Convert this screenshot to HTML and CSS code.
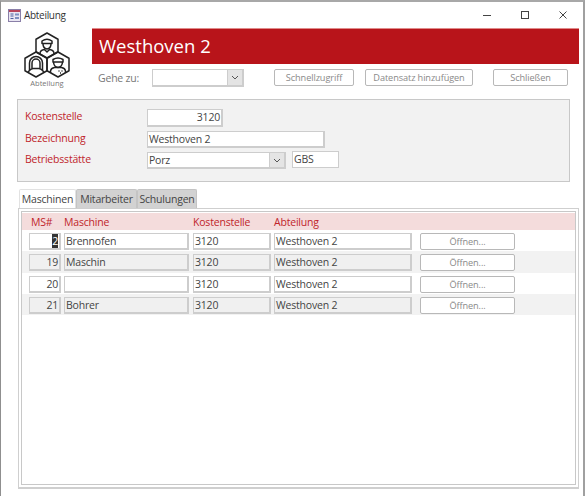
FILE: index.html
```html
<!DOCTYPE html>
<html>
<head>
  <meta http-equiv="content-type" content="text/html; charset=utf-8" />
  <title>Abteilung</title>
  <link rel="stylesheet" href="styles.css">
</head>
<body>

<div class="window">

  <div class="titlebar">
    <svg class="form-icon" width="13" height="13" viewBox="0 0 13 13">
      <rect x="0.5" y="0.5" width="12" height="12" fill="#e9e6f2" stroke="#8a7fa8"/>
      <rect x="1" y="1" width="11" height="2" fill="#b8455c"/>
      <path d="M2.5 5h3M2.5 7h3M2.5 9.500h3" stroke="#4a5f9e" fill="none"/>
      <rect x="7" y="4.500" width="4" height="2" fill="#7f90c0"/>
      <rect x="7" y="8" width="4" height="2" fill="#7f90c0"/>
    </svg>
    <span class="title-text">Abteilung</span>
    <div class="controls">
      <svg width="10" height="10" viewBox="0 0 10 10"><path d="M1 5.500h8" stroke="#444" fill="none"/></svg>
      <svg width="10" height="10" viewBox="0 0 10 10"><rect x="1.500" y="1.500" width="7" height="7" stroke="#444" fill="none"/></svg>
      <svg width="10" height="10" viewBox="0 0 10 10"><path d="M1.500 1.500l7 7M8.500 1.500l-7 7" stroke="#444" fill="none"/></svg>
    </div>
  </div>

  <div class="header">
    <div class="logo">
      <svg class="logo-icon" width="46" height="46" viewBox="0 0 46 46" fill="none" stroke="#222" stroke-width="1.500" stroke-linejoin="round">
        <g transform="translate(1 1)">
          <!-- three hexagons -->
          <path d="M22 0l11 6.250v12.500L22 25 11 18.750V6.250z"/>
          <path d="M11 19l11 6.250v12.500L11 44 0 37.750V25.250z"/>
          <path d="M33 19l11 6.250v12.500L33 44 22 37.750V25.250z"/>
          <!-- top person -->
          <path d="M17 8q5-3.500 10 0v2.500H17z"/>
          <path d="M18 10.500q0 5 4 5.500 4-.5 4-5.500"/>
          <path d="M15 21v-1q.5-3 4.500-3.500l2.500 2.500 2.500-2.500q4 .5 4.500 3.500v1"/>
          <!-- left person -->
          <path d="M4.500 37v-7a6.500 6.500 0 0 1 13 0v7"/>
          <path d="M7 35.500V30a4 4 0 0 1 8 0v5.500"/>
          <path d="M3 40q1-3.500 5-4.500h6q4 1 5 4.500"/>
          <!-- right person -->
          <path d="M28 26.500q5-3 10 0V29H28z"/>
          <path d="M28.500 29q.3 5 4.500 5.500 4.200-.5 4.500-5.500"/>
          <path d="M25.500 40v-2q.5-3 4-3.500h7q3.500.5 4 3.500v2"/>
          <path d="M33.500 38h1M36.500 38h1M35 40h1"/>
        </g>
      </svg>
      <div class="logo-caption">Abteilung</div>
    </div>

    <div class="header-main">
      <div class="banner">Westhoven 2</div>
      <div class="nav">
        <span class="nav-label">Gehe zu:</span>
        <div class="combo nav-combo"><span class="combo-value"></span><span class="combo-arrow"><svg width="8" height="5" viewBox="0 0 8 5"><path d="M1 1l3 3 3-3" stroke="#555" fill="none"/></svg></span></div>
        <div class="btn btn-quick">Schnellzugriff</div>
        <div class="btn btn-add">Datensatz hinzufügen</div>
        <div class="btn btn-close">Schließen</div>
      </div>
    </div>
  </div>

  <div class="panel">
    <div class="panel-row">
      <label class="panel-label">Kostenstelle</label>
      <div class="field num field-cost">3120</div>
    </div>
    <div class="panel-row">
      <label class="panel-label">Bezeichnung</label>
      <div class="field field-name">Westhoven 2</div>
    </div>
    <div class="panel-row">
      <label class="panel-label">Betriebsstätte</label>
      <div class="combo site-combo"><span class="combo-value">Porz</span><span class="combo-arrow"><svg width="8" height="5" viewBox="0 0 8 5"><path d="M1 1l3 3 3-3" stroke="#555" fill="none"/></svg></span></div>
      <div class="field field-short">GBS</div>
    </div>
  </div>

  <div class="tabs">
    <div class="tab active">Maschinen</div>
    <div class="tab tab-staff">Mitarbeiter</div>
    <div class="tab tab-train">Schulungen</div>
  </div>

  <div class="tabframe">
    <div class="tabinner">
      <div class="list-head">
        <div class="col-ms head-ms">MS#</div>
        <div class="col-machine">Maschine</div>
        <div class="col-cost">Kostenstelle</div>
        <div class="col-dept">Abteilung</div>
      </div>

      <div class="list-row">
        <div class="field num col-ms"><span class="selected">2</span></div>
        <div class="field col-machine">Brennofen</div>
        <div class="field col-cost">3120</div>
        <div class="field col-dept">Westhoven 2</div>
        <div class="btn col-open">Öffnen...</div>
      </div>
      <div class="list-row alt">
        <div class="field num col-ms">19</div>
        <div class="field col-machine">Maschin</div>
        <div class="field col-cost">3120</div>
        <div class="field col-dept">Westhoven 2</div>
        <div class="btn col-open">Öffnen...</div>
      </div>
      <div class="list-row">
        <div class="field num col-ms">20</div>
        <div class="field col-machine"></div>
        <div class="field col-cost">3120</div>
        <div class="field col-dept">Westhoven 2</div>
        <div class="btn col-open">Öffnen...</div>
      </div>
      <div class="list-row alt">
        <div class="field num col-ms">21</div>
        <div class="field col-machine">Bohrer</div>
        <div class="field col-cost">3120</div>
        <div class="field col-dept">Westhoven 2</div>
        <div class="btn col-open">Öffnen...</div>
      </div>
    </div>
  </div>

</div>

</body>
</html>
```
FILE: styles.css
```css
body {
  margin: 0;
  background: #fff;
  font-family: "Open Sans", "Liberation Sans", sans-serif;
  font-size: 10.5px;
  letter-spacing: -0.2px;
  color: #444;
  overflow: hidden;
}
.window {
  box-sizing: border-box;
  width: 585px;
  height: 496px;
  border-top: 2px solid #a8a8a8;
  border-left: 1px solid #8f8f8f;
  border-right: 2px solid #a0a0a0;
  background: #fff;
}

/* title bar */
.titlebar {
  display: flex;
  align-items: center;
  height: 26px;
  padding-left: 7px;
  color: #333;
}
.title-text {
  margin-left: 3px;
  font-size: 10px;
  letter-spacing: -0.3px;
}
.controls {
  display: flex;
  gap: 28px;
  margin-left: auto;
  margin-right: 15px;
}

/* header */
.header {
  display: flex;
  height: 62px;
}
.logo {
  width: 91px;
  padding-top: 4px;
  padding-left: 23px;
  box-sizing: border-box;
}
.logo-icon {
  display: block;
}
.logo-caption {
  width: 46px;
  text-align: center;
  font-size: 7.500px;
  letter-spacing: 0;
  line-height: 10px;
  color: #777;
}
.header-main {
  flex: 1;
}
.banner {
  box-sizing: border-box;
  height: 36px;
  margin-right: 4px;
  padding-left: 7px;
  border-top: 1px solid #e08a8a;
  background: #b8141a;
  color: #fff;
  font-size: 18.500px;
  letter-spacing: 0;
  line-height: 33px;
}
.nav {
  display: flex;
  align-items: flex-start;
  margin-top: 5px;
  padding-left: 6px;
}
.nav-label {
  width: 54px;
  line-height: 18px;
  color: #777;
}

/* inputs */
.combo, .field {
  box-sizing: border-box;
  border: 1px solid #cdcdcd;
  border-bottom-width: 2px;
  border-right-width: 2px;
  background: #fff;
  white-space: nowrap;
  overflow: hidden;
}
.combo {
  display: flex;
}
.combo-value {
  flex: 1;
  padding-left: 1px;
  line-height: 15px;
}
.combo-arrow {
  display: flex;
  align-items: center;
  justify-content: center;
  width: 14px;
  background: #e4e4e4;
  border-left: 1px solid #cdcdcd;
}
.field {
  height: 17px;
  line-height: 14px;
  padding: 0 1px;
}
.num {
  text-align: right;
}
.selected {
  background: #333;
  color: #fff;
}
.btn {
  box-sizing: border-box;
  height: 17px;
  border: 1px solid #b8b8b8;
  border-radius: 2px;
  background: #fff;
  color: #8a8a8a;
  font-size: 9.200px;
  letter-spacing: -0.1px;
  line-height: 15px;
  text-align: center;
}
.nav-combo {
  width: 92px;
  height: 18px;
  margin-right: 30px;
}
.btn-quick {
  width: 80px;
  margin-right: 11px;
}
.btn-add {
  width: 108px;
  margin-right: 20px;
}
.btn-close {
  width: 75px;
}

/* detail panel */
.panel {
  box-sizing: border-box;
  display: flex;
  flex-direction: column;
  gap: 4px;
  width: 553px;
  height: 83px;
  margin-top: 9px;
  margin-left: 16px;
  padding: 9px 0 0 7px;
  border: 1px solid #c8c8c8;
  background: #f2f2f2;
}
.panel-row {
  display: flex;
  align-items: flex-start;
}
.panel-label {
  width: 122px;
  color: #c0252b;
  line-height: 15px;
}
.field-cost {
  width: 76px;
  height: 18px;
  line-height: 15px;
}
.field-name {
  width: 178px;
  line-height: 15px;
}
.site-combo {
  width: 139px;
  height: 17px;
  margin-right: 6px;
}
.field-short {
  width: 47px;
  height: 17px;
  margin-top: -1px;
  border-width: 1px;
}

/* tabs */
.tabs {
  display: flex;
  height: 19px;
  margin-top: 7px;
  margin-left: 18px;
}
.tab {
  box-sizing: border-box;
  width: 60px;
  border: 1px solid #c4c4c4;
  border-bottom: 0;
  border-radius: 2px 2px 0 0;
  background: #d2d2d2;
  line-height: 19px;
  text-align: center;
}
.tab.active {
  width: 57px;
  background: #fff;
  border-color: #e2e2e2;
}
.tab-staff {
  width: 61px;
}

/* list */
.tabframe {
  box-sizing: border-box;
  width: 561px;
  height: 281px;
  margin-left: 17px;
  padding: 2px;
  border: 1px solid #cfcfcf;
  border-bottom-width: 2px;
}
.tabinner {
  box-sizing: border-box;
  height: 100%;
  padding-top: 1px;
  border: 1px solid #c8c8c8;
}
.list-head, .list-row {
  display: flex;
  padding-left: 7px;
}
.list-head {
  height: 17px;
  background: #f4dcdc;
  color: #c0252b;
  line-height: 19px;
}
.head-ms {
  box-sizing: border-box;
  padding-left: 2px;
}
.list-row {
  box-sizing: border-box;
  height: 21.330px;
  padding-top: 3px;
}
.list-row.alt {
  background: #f2f2f2;
}
.list-row.alt .field {
  background: #f0f0f0;
}
.col-ms {
  width: 32px;
  margin-right: 3px;
}
.col-machine {
  width: 125px;
  margin-right: 4px;
}
.col-cost {
  width: 78px;
  margin-right: 3px;
}
.col-dept {
  width: 138px;
  margin-right: 8px;
}
.col-open {
  width: 95px;
}
```
